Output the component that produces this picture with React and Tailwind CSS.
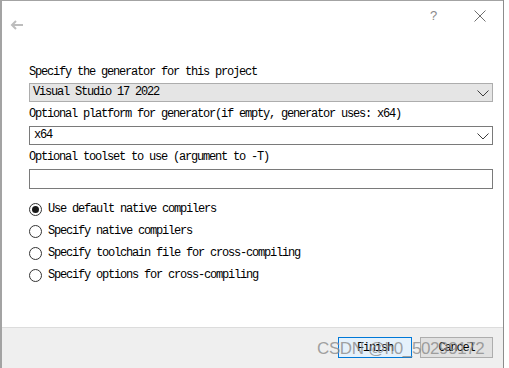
const mono = { fontFamily: '"Liberation Mono", "Noto Sans CJK SC", monospace' };

function Chevron() {
  return (
    <svg width="12" height="7" viewBox="0 0 12 7" className="absolute right-[3px] top-[6px]">
      <path d="M0.5 0.5 L6 6 L11.5 0.5" fill="none" stroke="#3c3c3c" strokeWidth="1" />
    </svg>
  );
}

function Radio({ checked, label }) {
  return (
    <div className="flex items-center h-[22px]">
      <div className="w-[13px] h-[13px] rounded-full border border-[#333] bg-white flex items-center justify-center">
        {checked && <div className="w-[7px] h-[7px] rounded-full bg-[#1a1a1a]" />}
      </div>
      <span className="ml-[6px] text-[12px] tracking-[-1.2px] text-black" style={mono}>
        {label}
      </span>
    </div>
  );
}

export default function App() {
  return (
    <div className="w-[509px] h-[368px] flex bg-white overflow-hidden relative">
      <div className="w-[503px] h-full flex flex-col border-l-2 border-t border-[#a3a3a3] bg-white">
        <div className="h-[54px] relative">
          <svg width="14" height="10" viewBox="0 0 14 10" className="absolute left-[8px] top-[19px]">
            <path d="M13 5 H2 M6 1 L2 5 L6 9" fill="none" stroke="#bdbdbd" strokeWidth="2" />
          </svg>
          <span className="absolute left-[428px] top-[5px] text-[13px] text-[#8a8a8a]" style={{ fontFamily: '"Liberation Sans", sans-serif' }}>
            ?
          </span>
          <svg width="12" height="12" viewBox="0 0 12 12" className="absolute left-[472px] top-[9px]">
            <path d="M0.5 0.5 L11.5 11.5 M11.5 0.5 L0.5 11.5" fill="none" stroke="#6e6e6e" strokeWidth="1" />
          </svg>
        </div>

        <div className="pl-[27px] pr-[10px] flex flex-col flex-1 text-[12px] tracking-[-1.2px] text-black" style={mono}>
          <div className="h-[14px] leading-[14px] mt-[10px]">Specify the generator for this project</div>
          <div className="relative h-[19px] mt-[4px] bg-[#e5e5e5] border border-[#adadad] pl-[3px] leading-[17px]">
            Visual Studio 17 2022
            <Chevron />
          </div>
          <div className="h-[14px] leading-[14px] mt-[5px]">
            Optional platform for generator(if empty, generator uses: x64)
          </div>
          <div className="relative h-[19px] mt-[5px] bg-white border border-[#7a7a7a] pl-[4px] leading-[17px]">
            x64
            <Chevron />
          </div>
          <div className="h-[14px] leading-[14px] mt-[5px]">Optional toolset to use (argument to -T)</div>
          <div className="h-[20px] mt-[5px] bg-white border border-[#7a7a7a]" />

          <div className="flex flex-col mt-[9px]">
            <Radio checked label="Use default native compilers" />
            <Radio label="Specify native compilers" />
            <Radio label="Specify toolchain file for cross-compiling" />
            <Radio label="Specify options for cross-compiling" />
          </div>
        </div>

        <div className="h-[41px] border-t border-[#dcdcdc] bg-[#efefef] flex items-start justify-end pr-[10px] pt-[9px] gap-[8px]">
          <button className="w-[74px] h-[21px] border border-[#0078d7] bg-[#e5f1fb] text-[12px] tracking-[-1.2px] text-black" style={mono}>
            Finish
          </button>
          <button className="w-[73px] h-[21px] border border-[#adadad] bg-[#e1e1e1] text-[12px] tracking-[-1.2px] text-black" style={mono}>
            Cancel
          </button>
        </div>
      </div>
      <div className="flex-1 border-l border-[#8c8c8c] bg-white" />

      <div
        className="absolute left-[317px] top-[339px] text-[17px] leading-[20px] tracking-[-0.4px] text-[#8a8a8a]/80 pointer-events-none whitespace-nowrap"
        style={{ fontFamily: '"Liberation Sans", sans-serif' }}
      >
        CSDN @h0_50299172
      </div>
    </div>
  );
}
